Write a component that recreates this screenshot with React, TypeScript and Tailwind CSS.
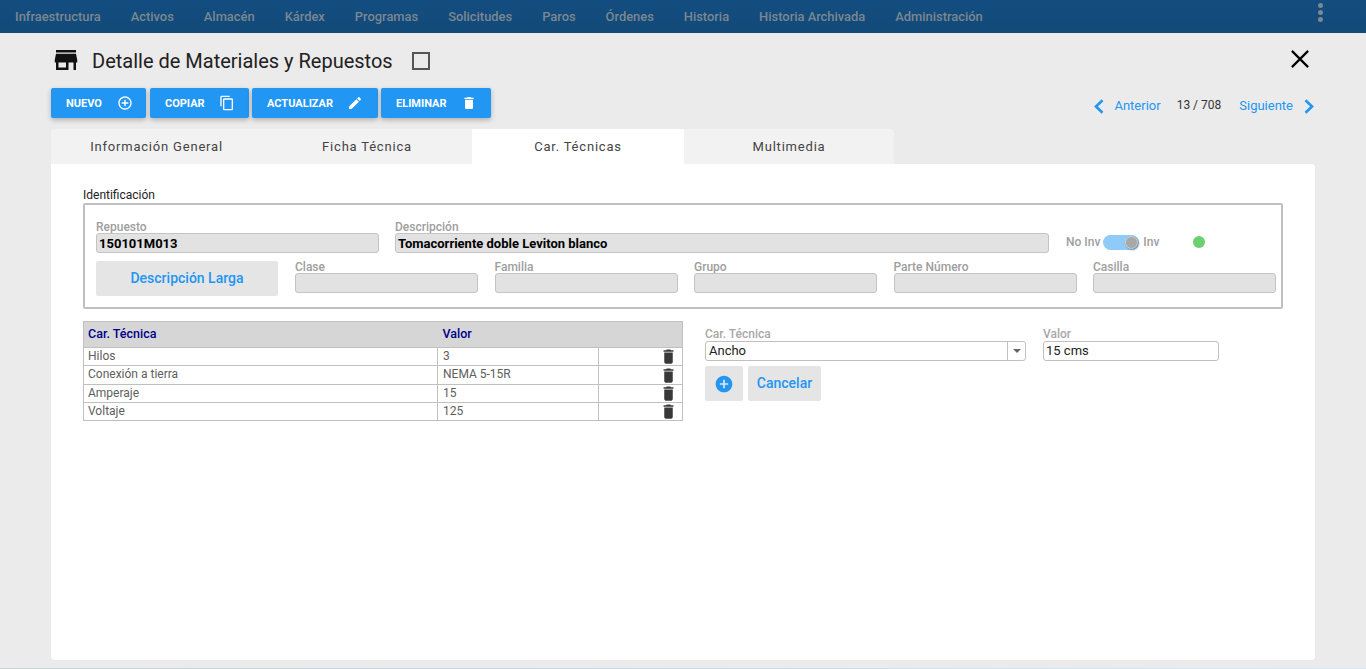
const navItems = ["Infraestructura", "Activos", "Almacén", "Kárdex", "Programas", "Solicitudes", "Paros", "Órdenes", "Historia", "Historia Archivada", "Administración"];

const icons = {
  store: "M20 4H4v2h16V4zm1 10v-2l-1-5H4l-1 5v2h1v6h10v-6h4v6h2v-6h1zm-9 4H6v-4h6v4z",
  addOutline: "M13 7h-2v4H7v2h4v4h2v-4h4v-2h-4V7zm-1-5C6.48 2 2 6.48 2 12s4.48 10 10 10 10-4.48 10-10S17.52 2 12 2zm0 18c-4.41 0-8-3.59-8-8s3.59-8 8-8 8 3.59 8 8-3.59 8-8 8z",
  copy: "M16 1H4c-1.1 0-2 .9-2 2v14h2V3h12V1zm3 4H8c-1.1 0-2 .9-2 2v14c0 1.1.9 2 2 2h11c1.1 0 2-.9 2-2V7c0-1.1-.9-2-2-2zm0 16H8V7h11v14z",
  edit: "M3 17.25V21h3.75L17.81 9.94l-3.75-3.75L3 17.25zM20.71 7.04c.39-.39.39-1.02 0-1.41l-2.34-2.34c-.39-.39-1.02-.39-1.41 0l-1.83 1.83 3.75 3.75 1.83-1.83z",
  trash: "M6 19c0 1.1.9 2 2 2h8c1.1 0 2-.9 2-2V7H6v12zM19 4h-3.5l-1-1h-5l-1 1H5v2h14V4z",
  add: "M12 2C6.48 2 2 6.48 2 12s4.48 10 10 10 10-4.48 10-10S17.52 2 12 2zm5 11h-4v4h-2v-4H7v-2h4V7h2v4h4v2z",
};

function Icon({ d, className }: { d: string; className: string }) {
  return (
    <svg viewBox="0 0 24 24" fill="currentColor" className={className}>
      <path d={d} />
    </svg>
  );
}

function Chevron({ d, className }: { d: string; className: string }) {
  return (
    <svg viewBox="0 0 11 15" fill="none" stroke="currentColor" strokeWidth="2.6" className={className}>
      <path d={d} />
    </svg>
  );
}

function ActionButton({ label, icon, width, gap }: { label: string; icon: string; width: string; gap: string }) {
  return (
    <button className={`${width} ${gap} h-[30px] flex items-center pl-[15px] bg-[#2196f3] text-white text-[11px] font-bold rounded-[2px] shadow-[0_2px_5px_rgba(0,0,0,0.26)]`}>
      <span className="pt-[2px]">{label}</span>
      <Icon d={icon} className="w-[16px] h-[16px]" />
    </button>
  );
}

function Field({ label, width, value }: { label: string; width: string; value?: string }) {
  return (
    <div className={`${width} shrink-0 flex flex-col`}>
      <label className="text-[12px] leading-[12px] font-medium text-[#9e9e9e]">{label}</label>
      <div className="h-[20px] px-[2px] bg-[#e2e2e2] border border-[#c4c4c4] rounded-[3px] text-[13px] leading-[20px] font-bold text-black">
        {value}
      </div>
    </div>
  );
}

const rows = [
  { name: "Hilos", value: "3", h: "h-[18px]" },
  { name: "Conexión a tierra", value: "NEMA 5-15R", h: "h-[19px]" },
  { name: "Amperaje", value: "15", h: "h-[18px]" },
  { name: "Voltaje", value: "125", h: "h-[18px]" },
];

export default function App() {
  return (
    <div className="h-[669px] w-[1366px] overflow-hidden flex flex-col bg-[#ebebeb] font-['Roboto',sans-serif]">
      {/* Top bar */}
      <nav className="h-[33px] shrink-0 flex items-center pl-[15px] pr-[43px] gap-[30px] bg-gradient-to-b from-[#134d80] to-[#124a78] text-[12.9px] font-medium text-[#7b8791]">
        {navItems.map((item) => (
          <span key={item}>{item}</span>
        ))}
        <div className="ml-auto flex flex-col gap-[2px] -mt-[8px]">
          <span className="w-[5px] h-[5px] rounded-full bg-[#7b8791]" />
          <span className="w-[5px] h-[5px] rounded-full bg-[#7b8791]" />
          <span className="w-[5px] h-[5px] rounded-full bg-[#7b8791]" />
        </div>
      </nav>

      <main className="flex-1 flex flex-col px-[51px]">
        {/* Title */}
        <div className="h-[55px] flex items-center">
          <Icon d={icons.store} className="w-[30px] h-[30px] text-[#111] -mt-[1px]" />
          <h1 className="ml-[11px] text-[20px] font-normal text-[#212121] leading-none">Detalle de Materiales y Repuestos</h1>
          <span className="ml-[19px] mt-[1px] w-[18px] h-[18px] border-2 border-[#555]" />
          <svg viewBox="0 0 24 24" fill="none" stroke="#000" strokeWidth="1.7" className="ml-auto w-[30px] h-[30px] -mt-[4px]">
            <path d="M5.5 5.5L18.5 18.5M18.5 5.5L5.5 18.5" />
          </svg>
        </div>

        {/* Actions */}
        <div className="h-[41px] flex items-start justify-between">
          <div className="flex">
            <ActionButton label="NUEVO" icon={icons.addOutline} width="w-[95px]" gap="gap-[15px]" />
            <div className="ml-[4px]">
              <ActionButton label="COPIAR" icon={icons.copy} width="w-[99px]" gap="gap-[14px]" />
            </div>
            <div className="ml-[3px]">
              <ActionButton label="ACTUALIZAR" icon={icons.edit} width="w-[126px]" gap="gap-[14px]" />
            </div>
            <div className="ml-[3px]">
              <ActionButton label="ELIMINAR" icon={icons.trash} width="w-[110px]" gap="gap-[14px]" />
            </div>
          </div>
          <div className="flex items-center h-[36px] text-[13px] text-[#2196f3]">
            <Chevron d="M9.5 1.2L3 7.5l6.5 6.3" className="w-[11px] h-[15px]" />
            <span className="ml-[10px]">Anterior</span>
            <span className="ml-[16px] text-[12px] text-[#333] -mt-[2px]">13 / 708</span>
            <span className="ml-[18px]">Siguiente</span>
            <Chevron d="M1.5 1.2L8 7.5l-6.5 6.3" className="w-[11px] h-[15px] ml-[11px]" />
          </div>
        </div>

        {/* Tabs */}
        <div className="h-[35px] flex text-[13px] tracking-[0.8px] text-[#444]">
          <div className="w-[211px] flex items-center justify-center bg-[#f2f2f2] rounded-tl-[4px]">Información General</div>
          <div className="w-[210px] flex items-center justify-center bg-[#f2f2f2]">Ficha Técnica</div>
          <div className="w-[212px] flex items-center justify-center bg-white">Car. Técnicas</div>
          <div className="w-[210px] flex items-center justify-center bg-[#f2f2f2] rounded-tr-[4px]">Multimedia</div>
        </div>

        {/* Card */}
        <section className="w-[1264px] h-[496px] bg-white rounded-b-[4px] rounded-tr-[4px] pt-[24px] pl-[32px]">
          <div className="text-[12px] leading-[14px] text-[#222]">Identificación</div>
          <div className="w-[1200px] h-[106px] mt-[1px] border-2 border-[#c0c0c0] rounded-[2px] pt-[16px] pl-[11px] pr-[5px]">
            <div className="flex items-start h-[37px]">
              <Field label="Repuesto" width="w-[283px]" value="150101M013" />
              <div className="w-[16px]" />
              <Field label="Descripción" width="w-[654px]" value="Tomacorriente doble Leviton blanco" />
              <div className="ml-[17px] mt-[12px] flex items-center text-[12px] font-medium text-[#9e9e9e]">
                <span>No Inv</span>
                <span className="ml-[3px] w-[36px] h-[15px] rounded-full bg-[#90caf9] flex items-center justify-end">
                  <span className="w-[13px] h-[13px] mr-[1px] rounded-full bg-[#a8a8a8] border border-[#d0d0d0] shadow-[1px_1px_2px_rgba(0,0,0,0.35)]" />
                </span>
                <span className="ml-[4px]">Inv</span>
                <span className="ml-[34px] w-[12px] h-[12px] rounded-full bg-[#6ccf70]" />
              </div>
            </div>
            <div className="flex items-start gap-[17px] mt-[3px]">
              <button className="w-[182px] h-[35px] shrink-0 bg-[#e5e5e5] rounded-[2px] text-[14px] font-medium text-[#2196f3]">Descripción Larga</button>
              <div className="flex gap-[16.5px]">
                <Field label="Clase" width="w-[183px]" />
                <Field label="Familia" width="w-[183px]" />
                <Field label="Grupo" width="w-[183px]" />
                <Field label="Parte Número" width="w-[183px]" />
                <Field label="Casilla" width="w-[183px]" />
              </div>
            </div>
          </div>

          <div className="flex mt-[12px] items-start">
            {/* Characteristics table */}
            <table className="w-[599px] border border-[#c0c0c0] border-collapse table-fixed text-[12px] text-[#5e5e5e]">
              <thead>
                <tr className="h-[26px] bg-[#d6d6d6] text-[12.5px] font-medium text-[#00008b]">
                  <th className="w-[354px] pl-[4px] text-left font-medium">Car. Técnica</th>
                  <th className="w-[161px] pl-[5px] text-left font-medium">Valor</th>
                  <th className="w-[84px]" />
                </tr>
              </thead>
              <tbody>
                {rows.map((row) => (
                  <tr key={row.name} className={`${row.h} border-t border-[#c0c0c0]`}>
                    <td className="pl-[4px] pb-[2px] leading-none">{row.name}</td>
                    <td className="pl-[5px] pb-[2px] leading-none border-l border-[#c0c0c0]">{row.value}</td>
                    <td className="p-0 border-l border-[#c0c0c0]">
                      <div className="h-[16px] flex items-center justify-end pr-[5px]">
                        <svg viewBox="0 0 24 24" fill="currentColor" preserveAspectRatio="none" className="w-[17px] h-[19px] shrink-0 text-[#383838]">
                          <path d={icons.trash} />
                        </svg>
                      </div>
                    </td>
                  </tr>
                ))}
              </tbody>
            </table>

            {/* Edit form */}
            <div className="ml-[22px] pt-[7px]">
              <div className="flex gap-[17px]">
                <div className="w-[321px]">
                  <label className="block text-[12px] leading-[12px] font-medium text-[#a8a8a8]">Car. Técnica</label>
                  <div className="h-[20px] mt-[1px] flex border border-[#c0c0c0] rounded-[3px] text-[13px] leading-[18px] text-[#222]">
                    <span className="flex-1 pl-[3px]">Ancho</span>
                    <span className="w-[18px] border-l border-[#c0c0c0] flex items-center justify-center">
                      <span className="w-0 h-0 border-x-[4px] border-x-transparent border-t-[4px] border-t-[#666]" />
                    </span>
                  </div>
                </div>
                <div className="w-[176px]">
                  <label className="block text-[12px] leading-[12px] font-medium text-[#a8a8a8]">Valor</label>
                  <div className="h-[20px] mt-[1px] border border-[#c0c0c0] rounded-[3px] pl-[2px] text-[13px] leading-[18px] text-[#222]">15 cms</div>
                </div>
              </div>
              <div className="flex gap-[5px] mt-[5px]">
                <button className="w-[38px] h-[35px] bg-[#e5e5e5] rounded-[2px] flex items-center justify-center">
                  <Icon d={icons.add} className="w-[20px] h-[20px] text-[#2196f3]" />
                </button>
                <button className="w-[73px] h-[35px] bg-[#e5e5e5] rounded-[2px] text-[14px] font-medium text-[#2196f3]">Cancelar</button>
              </div>
            </div>
          </div>
        </section>
      </main>
      <div className="h-px shrink-0 bg-gradient-to-r from-[#c9d3d3] via-[#c8dcea] to-[#d8e9f5]" />
    </div>
  );
}
